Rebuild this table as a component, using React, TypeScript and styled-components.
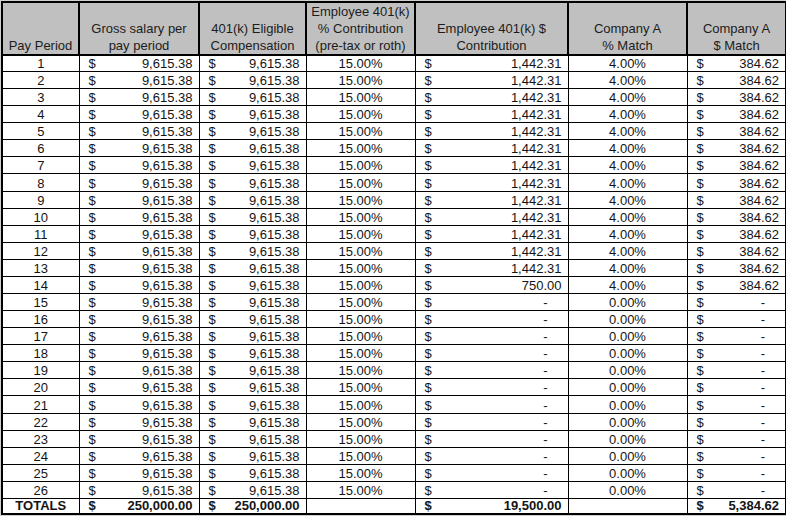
import React from "react";
import styled, { createGlobalStyle } from "styled-components";

const Global = createGlobalStyle`
  html, body { margin: 0; padding: 0; background: #fff; }
  body { font-family: "Liberation Sans", Arial, sans-serif; }
`;

const Page = styled.div`
  width: 786px;
  height: 516px;
  overflow: hidden;
  box-sizing: border-box;
  background: #d0d0d0;
  padding: 1px 0 0 1px;
`;

const Sheet = styled.table`
  border-collapse: collapse;
  table-layout: fixed;
  width: 784px;
  font-size: 13px;
  color: #141414;
  background: #fff;
`;

const Head = styled.th`
  background: #c0c0c0;
  border: 2px solid #000;
  vertical-align: bottom;
  text-align: center;
  font-weight: normal;
  line-height: 17px;
  height: 48px;
  padding: 0 2px;
  color: #1c1c1c;
`;

const Body = styled.tbody`
  tr:first-child td {
    height: 13px;
  }
`;

const Row = styled.tr`
  td {
    height: 16.08px;
  }
  td:first-child {
    border-left: 2px solid #000;
  }
  td:last-child {
    border-right: 2px solid #000;
  }
`;

const TotalRow = styled(Row)`
  font-weight: bold;
  td {
    height: 14px;
    line-height: 14px;
    border-bottom: 2px solid #000;
  }
`;

const Cell = styled.td<{ $align?: "center" | "left" }>`
  border: 1px solid #000;
  padding: 0;
  vertical-align: bottom;
  line-height: 15px;
  text-align: ${(p) => p.$align ?? "center"};
  white-space: nowrap;
  overflow: hidden;
`;

const Money = styled.div<{ $dash?: boolean }>`
  display: flex;
  justify-content: space-between;
  padding: 0 ${(p) => (p.$dash ? "20px" : "6px")} 0 9px;
`;

type R = {
  n: number;
  emp: string;
  coPct: string;
  co: string;
};

const rows: R[] = Array.from({ length: 26 }, (_, i) => {
  const n = i + 1;
  return {
    n,
    emp: n <= 13 ? "1,442.31" : n === 14 ? "750.00" : "-",
    coPct: n <= 14 ? "4.00%" : "0.00%",
    co: n <= 14 ? "384.62" : "-",
  };
});

const MoneyCell = ({ v }: { v: string }) => (
  <Cell $align="left">
    <Money $dash={v === "-"}>
      <span>$</span>
      <span>{v}</span>
    </Money>
  </Cell>
);

export default function App() {
  return (
    <Page>
      <Global />
      <Sheet>
        <colgroup>
          <col style={{ width: 77 }} />
          <col style={{ width: 120 }} />
          <col style={{ width: 107 }} />
          <col style={{ width: 109 }} />
          <col style={{ width: 153 }} />
          <col style={{ width: 119 }} />
          <col style={{ width: 99 }} />
        </colgroup>
        <thead>
          <tr>
            <Head>Pay Period</Head>
            <Head>
              Gross salary per
              <br />
              pay period
            </Head>
            <Head>
              401(k) Eligible
              <br />
              Compensation
            </Head>
            <Head>
              Employee 401(k)
              <br />% Contribution
              <br />
              (pre-tax or roth)
            </Head>
            <Head>
              Employee 401(k) $
              <br />
              Contribution
            </Head>
            <Head>
              Company A
              <br />% Match
            </Head>
            <Head>
              Company A
              <br />$ Match
            </Head>
          </tr>
        </thead>
        <Body>
          {rows.map((r) => (
            <Row key={r.n}>
              <Cell>{r.n}</Cell>
              <MoneyCell v="9,615.38" />
              <MoneyCell v="9,615.38" />
              <Cell>15.00%</Cell>
              <MoneyCell v={r.emp} />
              <Cell>{r.coPct}</Cell>
              <MoneyCell v={r.co} />
            </Row>
          ))}
          <TotalRow>
            <Cell>TOTALS</Cell>
            <MoneyCell v="250,000.00" />
            <MoneyCell v="250,000.00" />
            <Cell />
            <MoneyCell v="19,500.00" />
            <Cell />
            <MoneyCell v="5,384.62" />
          </TotalRow>
        </Body>
      </Sheet>
    </Page>
  );
}
